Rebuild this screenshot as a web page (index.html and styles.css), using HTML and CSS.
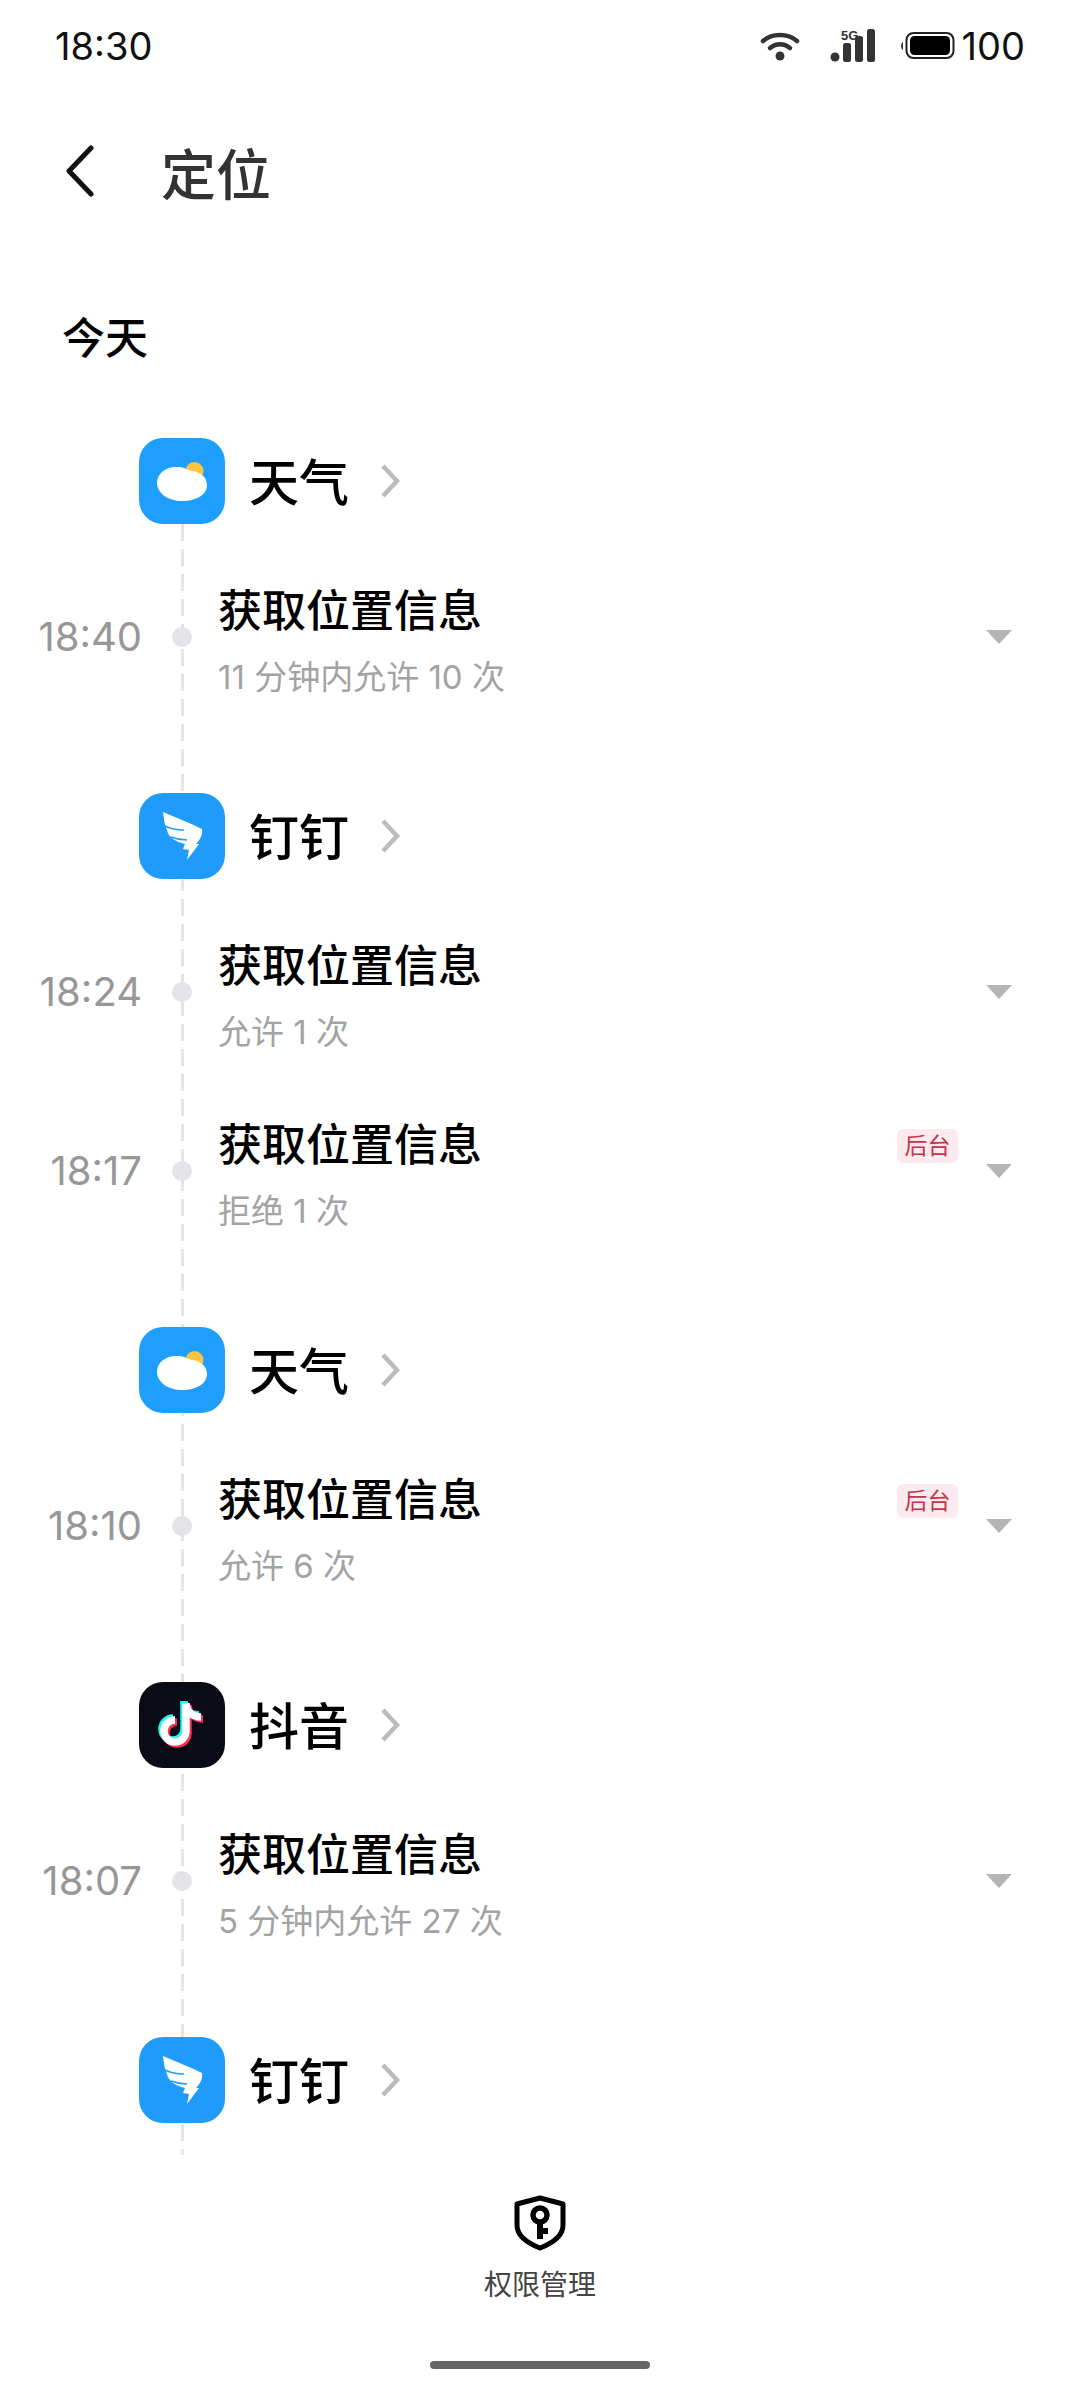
FILE: index.html
```html
<!DOCTYPE html>
<html lang="zh-CN">
<head>
    <meta charset="UTF-8">
    <meta name="viewport" content="width=device-width, initial-scale=1.0">
    <title>定位</title>
    <link rel="stylesheet" href="styles.css">
</head>
<body>
    <svg class="defs" width="0" height="0">
        <symbol id="app-weather" viewBox="0 0 86 86">
            <circle cx="55.500" cy="33" r="9" fill="#fcc53d"/>
            <path d="M18 45c0-10 9-16 19-16 3 0 7 0 10 2 4 2 12 2 16 6 3 2 5 6 5 10 0 10-11 16-25 16S18 55 18 45z" fill="#fff"/>
        </symbol>
        <symbol id="app-ding" viewBox="0 0 86 86">
            <path d="M24 19c12 5 27 11 39 17 1 6-2 11-6 15l3 0-12 16 2-10-6-1 2-5c-9-2-17-7-18-14-3-6-3-12-4-18z" fill="#fff"/>
            <path d="M26 33c6 3 12 4 19 4M32 44c5 2 10 3 16 3" fill="none" stroke="#1e9bfb" stroke-width="1.500"/>
        </symbol>
    </svg>

    <div class="page">
        <div class="status-bar">
            <span class="clock">18:30</span>
            <div class="status-icons">
                <svg class="icon-wifi" width="40" height="32" viewBox="0 0 40 32">
                    <path d="M3 11c9-8 25-8 34 0" fill="none" stroke="#333" stroke-width="4.500" stroke-linecap="round"/>
                    <path d="M10 18c6-5 14-5 20 0" fill="none" stroke="#333" stroke-width="4.500" stroke-linecap="round"/>
                    <circle cx="20" cy="26" r="4.500" fill="#333"/>
                </svg>
                <svg class="icon-signal" width="46" height="34" viewBox="0 0 46 34">
                    <text x="11" y="11" class="five-g">5G</text>
                    <circle cx="5" cy="28" r="4.500" fill="#333"/>
                    <rect x="13" y="14" width="8" height="19" rx="2.500" fill="#333"/>
                    <rect x="25" y="7" width="8" height="26" rx="2.500" fill="#333"/>
                    <rect x="37" y="0" width="8" height="33" rx="2.500" fill="#333"/>
                </svg>
                <svg class="icon-battery" width="56" height="30" viewBox="0 0 56 30">
                    <path d="M3 11c-1.500 1-2 2.500-2 4s.5 3 2 4z" fill="#333"/>
                    <rect x="6.500" y="2" width="47" height="25" rx="7" fill="none" stroke="#222" stroke-width="2"/>
                    <rect x="10" y="5" width="40" height="19" rx="4.500" fill="#000"/>
                </svg>
                <span class="battery-level">100</span>
            </div>
        </div>

        <div class="title-bar">
            <svg class="back" width="30" height="52" viewBox="0 0 30 52">
                <path d="M26 3L4 26l22 23" fill="none" stroke="#111" stroke-width="5" stroke-linecap="round" stroke-linejoin="round"/>
            </svg>
            <h1>定位</h1>
        </div>

        <div class="day">今天</div>

        <div class="timeline">
            <div class="rail"></div>

            <div class="group">
                <div class="app">
                    <div class="app-icon weather"><svg width="86" height="86"><use href="#app-weather"/></svg></div>
                    <span class="app-name">天气</span>
                    <svg class="chevron" width="20" height="36" viewBox="0 0 20 36"><path d="M3 3l14 15L3 33" fill="none" stroke="#bbb" stroke-width="4.500"/></svg>
                </div>
                <div class="event">
                    <span class="time">18:40</span>
                    <span class="dot"></span>
                    <div class="info">
                        <div class="event-title">获取位置信息</div>
                        <div class="event-sub">11 分钟内允许 10 次</div>
                    </div>
                    <span class="caret"></span>
                </div>
            </div>

            <div class="group">
                <div class="app">
                    <div class="app-icon ding"><svg width="86" height="86"><use href="#app-ding"/></svg></div>
                    <span class="app-name">钉钉</span>
                    <svg class="chevron" width="20" height="36" viewBox="0 0 20 36"><path d="M3 3l14 15L3 33" fill="none" stroke="#bbb" stroke-width="4.500"/></svg>
                </div>
                <div class="event">
                    <span class="time">18:24</span>
                    <span class="dot"></span>
                    <div class="info">
                        <div class="event-title">获取位置信息</div>
                        <div class="event-sub">允许 1 次</div>
                    </div>
                    <span class="caret"></span>
                </div>
                <div class="event">
                    <span class="time">18:17</span>
                    <span class="dot"></span>
                    <div class="info">
                        <div class="event-title">获取位置信息</div>
                        <div class="event-sub">拒绝 1 次</div>
                    </div>
                    <span class="tag">后台</span>
                    <span class="caret"></span>
                </div>
            </div>

            <div class="group">
                <div class="app">
                    <div class="app-icon weather"><svg width="86" height="86"><use href="#app-weather"/></svg></div>
                    <span class="app-name">天气</span>
                    <svg class="chevron" width="20" height="36" viewBox="0 0 20 36"><path d="M3 3l14 15L3 33" fill="none" stroke="#bbb" stroke-width="4.500"/></svg>
                </div>
                <div class="event">
                    <span class="time">18:10</span>
                    <span class="dot"></span>
                    <div class="info">
                        <div class="event-title">获取位置信息</div>
                        <div class="event-sub">允许 6 次</div>
                    </div>
                    <span class="tag">后台</span>
                    <span class="caret"></span>
                </div>
            </div>

            <div class="group">
                <div class="app">
                    <div class="app-icon tiktok">
                        <svg width="86" height="86" viewBox="0 0 86 86">
                            <defs>
                                <g id="note" fill="none" stroke-width="7.500">
                                    <path d="M47 21v28a11 11 0 1 1-11-11"/>
                                    <path d="M47 22c1 8 7 13 15 13"/>
                                </g>
                            </defs>
                            <use href="#note" x="-2" y="-2" stroke="#25f4ee"/>
                            <use href="#note" x="2" y="2" stroke="#fe2c55"/>
                            <use href="#note" stroke="#fff"/>
                        </svg>
                    </div>
                    <span class="app-name">抖音</span>
                    <svg class="chevron" width="20" height="36" viewBox="0 0 20 36"><path d="M3 3l14 15L3 33" fill="none" stroke="#bbb" stroke-width="4.500"/></svg>
                </div>
                <div class="event">
                    <span class="time">18:07</span>
                    <span class="dot"></span>
                    <div class="info">
                        <div class="event-title">获取位置信息</div>
                        <div class="event-sub">5 分钟内允许 27 次</div>
                    </div>
                    <span class="caret"></span>
                </div>
            </div>

            <div class="group">
                <div class="app">
                    <div class="app-icon ding"><svg width="86" height="86"><use href="#app-ding"/></svg></div>
                    <span class="app-name">钉钉</span>
                    <svg class="chevron" width="20" height="36" viewBox="0 0 20 36"><path d="M3 3l14 15L3 33" fill="none" stroke="#bbb" stroke-width="4.500"/></svg>
                </div>
            </div>
        </div>

        <div class="bottom">
            <svg class="shield" width="52" height="56" viewBox="0 0 52 56">
                <path d="M26 3l23 6v21c0 10-10 18-23 23C13 48 3 40 3 30V9z" fill="none" stroke="#000" stroke-width="5" stroke-linejoin="round"/>
                <circle cx="26" cy="20" r="7" fill="none" stroke="#000" stroke-width="5.500"/>
                <path d="M26 26v18M26 36h8" fill="none" stroke="#000" stroke-width="6"/>
            </svg>
            <span class="bottom-label">权限管理</span>
        </div>
        <div class="home-bar"></div>
    </div>
</body>
</html>
```

FILE: styles.css
```css
* { box-sizing: border-box; }
body { margin: 0; background: #fff; font-family: Inter, "Noto Sans CJK SC", sans-serif; }
.defs { position: absolute; }
.page { width: 1080px; height: 2400px; display: flex; flex-direction: column; overflow: hidden; }

.status-bar { height: 92px; padding: 0 55px 0 55px; display: flex; justify-content: space-between; align-items: center; }
.clock { font-size: 38px; color: #111; }
.status-icons { display: flex; align-items: center; }
.icon-wifi { margin-right: 30px; }
.icon-signal { margin-right: 24px; }
.icon-battery { margin-right: 6px; }
.five-g { font-size: 13px; font-weight: 700; fill: #333; font-family: "Liberation Sans", sans-serif; }
.battery-level { font-size: 38px; color: #111; }

.title-bar { height: 158px; padding-left: 65px; display: flex; align-items: center; }
.title-bar h1 { margin: 0 0 0 66px; font-size: 55px; font-weight: 500; color: #333; }

.day { height: 188px; padding: 60px 0 0 62px; font-size: 43px; line-height: 56px; font-weight: 500; color: #000; }

.timeline { position: relative; flex: 1; overflow: hidden; }
.rail { position: absolute; left: 181px; top: 86px; bottom: 0; width: 3px; background: repeating-linear-gradient(to bottom, #e4e4e8 0 17px, transparent 17px 25px); }

.group { position: relative; margin-bottom: 67px; }
.app { display: flex; align-items: center; padding-left: 139px; margin-bottom: 23px; }
.app-icon { width: 86px; height: 86px; border-radius: 24px; margin-right: 24px; }
.app-icon svg { display: block; }
.weather { background: #1e9fff; }
.ding { background: #1e9bfb; }
.tiktok { background: #0b0b17; }
.app-name { font-size: 50px; line-height: 70px; margin-top: 3px; font-weight: 500; color: #000; }
.chevron { margin-left: 31px; }

.event { height: 179px; display: flex; align-items: center; padding-right: 68px; }
.time { width: 142px; text-align: right; font-size: 40px; color: #979797; }
.dot { width: 20px; height: 20px; margin: 0 26px 0 30px; border-radius: 50%; background: #e3e3e8; position: relative; }
.info { flex: 1; padding-top: 6px; }
.event-title { font-size: 44px; line-height: 60px; font-weight: 500; color: #000; }
.event-sub { font-size: 33px; line-height: 44px; margin-top: 14px; color: #a3a3a3; }
.tag { width: 61px; height: 34px; margin: 0 28px 50px 0; border-radius: 6px; background: #fdeaee; color: #c8324b; font-size: 23px; line-height: 34px; text-align: center; }
.caret { width: 0; height: 0; border-left: 13px solid transparent; border-right: 13px solid transparent; border-top: 14px solid #b5b5b5; }

.bottom { height: 206px; display: flex; flex-direction: column; align-items: center; padding-top: 40px; }
.bottom-label { margin-top: 12px; font-size: 28px; color: #444; }
.home-bar { width: 220px; height: 8px; margin: 0 auto 31px; border-radius: 4px; background: #666; }
```
